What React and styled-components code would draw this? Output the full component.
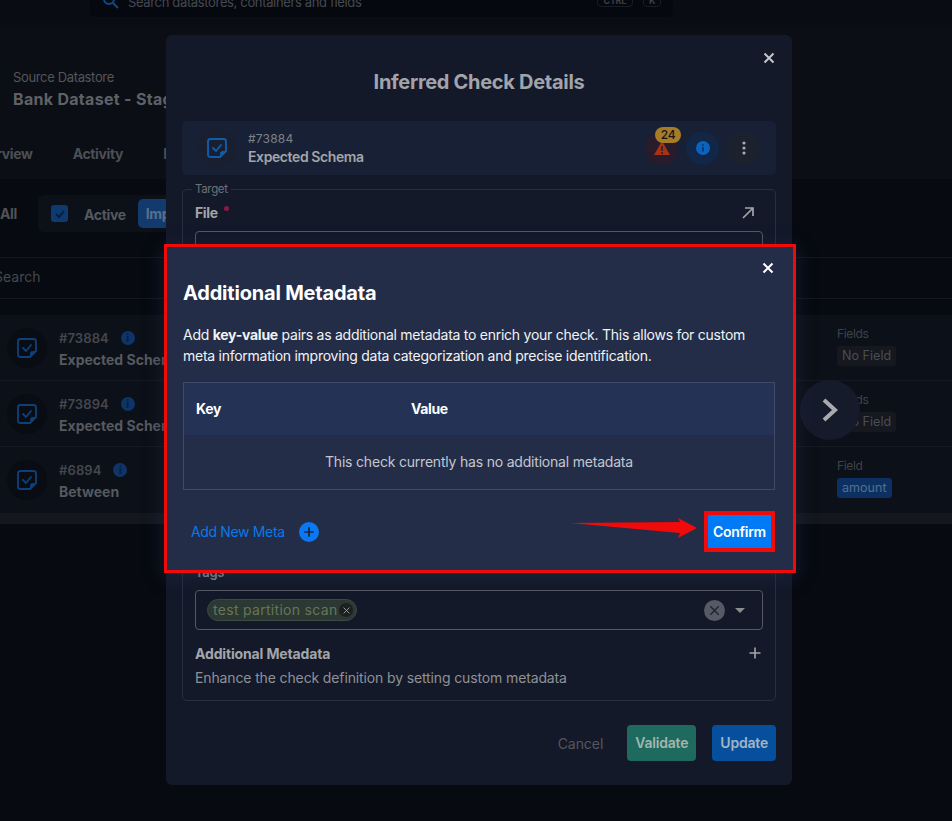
import React from "react";
import styled, { createGlobalStyle } from "styled-components";

const Global = createGlobalStyle`
  html, body { margin: 0; padding: 0; background: #070a11; overflow: hidden; }
  * { box-sizing: border-box; }
  body { font-family: Inter, "Noto Sans", sans-serif; letter-spacing: -0.35px; }
`;

const Stage = styled.div`position: relative; width: 952px; height: 821px; overflow: hidden; background: #070a11;`;

/* ---------- dimmed page behind the dialogs ---------- */
const Page = styled.div`display: flex; flex-direction: column; height: 821px;`;
const TopBar = styled.div`height: 27px; padding-left: 90px; background: #090c13;`;
const GlobalSearch = styled.div`
  width: 583px; height: 17px; background: #06080f; border-radius: 0 0 6px 6px; display: flex; align-items: flex-end;
  padding: 0 12px 10px; gap: 8px; font-size: 13px; line-height: 14px; overflow: hidden; color: #45484f;
  svg { flex: none; margin-bottom: -3px; }
`;
const SearchHint = styled.span`flex: 1; white-space: nowrap; margin-bottom: -2px;`;
const Kbd = styled.span`font-size: 9px; font-weight: 700; line-height: 10px; padding: 0 ${p => p.$pad}px; border: 1px solid #191c24; border-radius: 4px; color: #3c3f46; margin-left: ${p => p.$ml}px;`;
const Header = styled.div`height: 152px; background: #0b0e15; display: flex; flex-direction: column;`;
const Datastore = styled.div`height: 117px; padding: 41px 0 0 13px;`;
const DsLabel = styled.div`font-size: 13px; line-height: 18px; color: #53565b;`;
const DsName = styled.div`font-size: 16px; line-height: 24px; margin-top: 1px; font-weight: 700; color: #5f6166; white-space: nowrap; letter-spacing: 0.3px;`;
const Tabs = styled.div`display: flex; gap: 40px; margin-left: -30px; font-size: 14px; font-weight: 700; color: #4c4f54; line-height: 20px;`;
const Filters = styled.div`height: 78px; padding: 16px 0 0 0; display: flex; align-items: flex-start; gap: 21px;`;
const AllLabel = styled.span`font-size: 14px; font-weight: 700; color: #4f5257; line-height: 37px;`;
const FilterPill = styled.div`height: 37px; width: 160px; background: #0c1019; border-radius: 6px; display: flex; align-items: center; padding-left: 13px; gap: 16px;`;
const FilterCheck = styled.span`width: 17px; height: 17px; border-radius: 3px; background: #0e3a6f; flex: none; display: flex; align-items: center; justify-content: center;`;
const FilterText = styled.span`font-size: 14px; font-weight: 700; color: #55585d; margin-top: 2px;`;
const FilterActive = styled.span`height: 29px; padding: 0 8px; margin-left: -4px; border-radius: 5px; background: #123a6d; color: #55708f; font-size: 14px; font-weight: 700; line-height: 30px;`;
const SearchRow = styled.div`height: 42px; border-top: 1px solid #14171f; border-bottom: 1px solid #14171f; font-size: 14px; line-height: 38px; color: #45484e; text-indent: -6px; letter-spacing: 0;`;
const Gap = styled.div`height: ${p => p.$h}px; flex: none;`;
const RowList = styled.div`background: #0c1018; display: flex; flex-direction: column;`;
const Row = styled.div`
  height: 66px; display: grid; padding-left: 7px;
  grid-template-columns: 830px 1fr; align-items: start;
  border-bottom: ${p => (p.$last ? "0" : "1px solid #151922")};
`;
const RowLeft = styled.div`display: flex; align-items: center; gap: 12px; height: 66px;`;
const RowIcon = styled.span`width: 40px; height: 40px; border-radius: 50%; background: #090c12; display: flex; align-items: center; justify-content: center; flex: none;`;
const RowText = styled.div`display: flex; flex-direction: column; gap: 2px; padding-top: 2px;`;
const RowId = styled.div`display: flex; align-items: center; gap: 12px; font-size: 13px; line-height: 20px; font-weight: 600; color: #44474d; letter-spacing: 0.1px;`;
const RowTitle = styled.div`font-size: 14px; line-height: 20px; font-weight: 700; color: #56595e; white-space: nowrap; letter-spacing: 0;`;
const Dot = styled.span`width: 14px; height: 14px; border-radius: 50%; background: #0e3468; color: #07203f; font-size: 10px; font-weight: 800; line-height: 14px; text-align: center; flex: none;`;
const RowRight = styled.div`padding-top: 11px; display: flex; flex-direction: column; align-items: flex-start; gap: 5px;`;
const FieldLabel = styled.div`font-size: 12px; line-height: 15px; color: #3f4248;`;
const Chip = styled.div`height: 20px; padding: 0 5px; border-radius: 3px; font-size: 12.5px; line-height: 20px; letter-spacing: 0.05px; background: ${p => (p.$blue ? "#0d3062" : "#15181f")}; color: ${p => (p.$blue ? "#54708f" : "#4a4d53")};`;
const Scrollbar = styled.div`height: 11px; background: #14171e;`;

const NextButton = styled.div`
  position: absolute; left: 800px; top: 380px; width: 60px; height: 60px; border-radius: 50%;
  background: #151b2b; display: flex; align-items: center; justify-content: center;
`;

/* ---------- inferred check dialog ---------- */
const CheckDialog = styled.div`
  position: absolute; left: 166px; top: 35px; width: 626px; height: 750px;
  background: #131929; border-radius: 6px; padding: 0 16px;
  display: flex; flex-direction: column;
`;
const CloseBtn = styled.span`position: absolute; display: flex; right: ${p => p.$r}px; top: ${p => p.$t}px; color: ${p => p.$c};`;
const DialogTitle = styled.h2`margin: 35px 0 0; height: 24px; font-size: 20px; line-height: 24px; font-weight: 700; text-align: center; color: #a2a4a9; letter-spacing: -0.3px;`;
const CheckCard = styled.div`margin-top: 27px; height: 54px; border-radius: 5px; background: #172035; display: flex; align-items: center; padding: 0 16px; gap: 12px;`;
const CardIcon = styled.span`width: 38px; height: 38px; border-radius: 50%; background: #191f2e; display: flex; align-items: center; justify-content: center; flex: none;`;
const CardText = styled.div`flex: 1; display: flex; flex-direction: column; padding-top: 1px;`;
const CardId = styled.div`font-size: 12px; line-height: 16px; color: #7f8288; letter-spacing: 0.2px;`;
const CardTitle = styled.div`font-size: 14px; line-height: 20px; font-weight: 600; color: #a3a5aa; letter-spacing: -0.4px;`;
const CardActions = styled.div`display: flex; gap: 8px;`;
const ActionCircle = styled.span`position: relative; width: 33px; height: 33px; border-radius: 50%; background: ${p => p.$bg}; display: flex; align-items: center; justify-content: center;`;
const CountBadge = styled.span`position: absolute; left: 10px; top: -5px; width: 26px; height: 16px; border-radius: 8px; background: #a67c26; color: #16161a; font-size: 12px; line-height: 16px; text-align: center; font-weight: 500;`;
const FieldSet = styled.fieldset`
  margin: 8px 0 0; padding: 0 12px; height: 518px; border: 1px solid #292f40; border-radius: 5px;
  min-width: 0;
`;
const Legend = styled.legend`font-size: 11.5px; line-height: 12px; color: #6d7076; padding: 0 3px; margin-left: -3px;`;
const FileRow = styled.div`display: flex; justify-content: space-between; align-items: center; height: 24px; margin-top: 5px; padding-right: 8px; svg { margin-top: 2px; }`;
const FileLabel = styled.div`font-size: 14px; font-weight: 700; color: #a3a5aa; position: relative;`;
const Required = styled.span`position: absolute; left: 29px; top: 2px; width: 5px; height: 5px; border-radius: 50%; background: #8d1745;`;
const InputBox = styled.div`height: ${p => p.$h}px; margin-top: ${p => p.$mt}px; border: 1px solid #555962; border-radius: 4px; display: flex; align-items: center; padding: 0 17px 0 12px; gap: 8px;`;
const TagsLabel = styled.div`margin-top: 294px; height: 14px; font-size: 13px; line-height: 14px; color: #95979c; font-weight: 600;`;
const Tag = styled.span`height: 22px; border-radius: 11px; background: #2b3833; border: 1px solid #3c4a3f; color: #667659; font-size: 14px; line-height: 20px; padding: 0 3px 0 5px; display: flex; align-items: center; gap: 2px; letter-spacing: 0.3px; margin-left: -1px;`;
const TagRemove = styled.span`width: 14px; height: 14px; border-radius: 50%; background: #1b211f; color: #a2a4a8; display: flex; align-items: center; justify-content: center;`;
const Spacer = styled.span`flex: 1;`;
const ClearBtn = styled.span`width: 21px; height: 21px; border-radius: 50%; background: #565a65; color: #1e2230; display: flex; align-items: center; justify-content: center; margin-right: 2px;`;
const Caret = styled.span`width: 0; height: 0; border-left: 5.5px solid transparent; border-right: 5.5px solid transparent; border-top: 5px solid #8b8d93;`;
const MetaRow = styled.div`display: flex; justify-content: space-between; align-items: center; height: 20px; margin-top: 13px; padding-right: 1px; font-size: 14px; font-weight: 700; color: #a3a5aa; letter-spacing: -0.15px;`;
const MetaHelp = styled.div`margin-top: 5px; font-size: 14px; line-height: 20px; color: #8f9196; letter-spacing: -0.13px;`;
const DialogActions = styled.div`margin-top: 24px; display: flex; justify-content: flex-end; align-items: center;`;
const CancelBtn = styled.span`font-size: 14px; color: #54575d; margin-right: 24px; letter-spacing: -0.05px;`;
const ActionBtn = styled.span`height: 36px; padding: 0 8px; border-radius: 4px; margin-left: ${p => p.$ml}px; background: ${p => p.$bg}; color: ${p => p.$c}; font-size: 14px; font-weight: 600; line-height: 36px; letter-spacing: -0.2px;`;

/* ---------- additional metadata dialog ---------- */
const MetaDialog = styled.div`
  position: absolute; left: 164px; top: 244px; width: 632px; height: 329px;
  background: #232d48; border: 3px solid #f10a0a; padding: 0 16px;
  box-shadow: 0 4px 16px rgba(35, 45, 72, 0.55);
`;
const MetaTitle = styled.h2`margin: 33px 0 0; font-size: 20px; line-height: 26px; font-weight: 700; color: #fff; letter-spacing: -0.2px;`;
const MetaText = styled.p`margin: 18px 0 0; font-size: 14px; line-height: 21px; color: #f2f3f5; letter-spacing: -0.26px; white-space: nowrap; b { font-weight: 700; }`;
const Table = styled.div`margin-top: 16px; width: 592px; height: 108px; border: 1px solid #40496a; display: flex; flex-direction: column;`;
const TableHead = styled.div`height: 52px; background: #233255; display: grid; grid-template-columns: 215px 1fr; align-items: center; padding: 0 0 2px 12px; font-size: 14px; font-weight: 700; color: #fff;`;
const TableEmpty = styled.div`flex: 1; display: flex; align-items: center; justify-content: center; padding-bottom: 2px; font-size: 14px; color: #c4c7cf; letter-spacing: -0.2px;`;
const MetaFooter = styled.div`margin-top: 21px; display: flex; align-items: center; justify-content: space-between; padding-left: 8px; height: 41px; width: 592px;`;
const AddMeta = styled.div`display: flex; align-items: center; gap: 14px; font-size: 14px; color: #0a78e8;`;
const PlusCircle = styled.span`width: 20px; height: 20px; border-radius: 50%; background: #0a78f0; color: #1b2440; display: flex; align-items: center; justify-content: center;`;
const ConfirmFrame = styled.div`border: 4px solid #f10a0a; display: flex;`;
const ConfirmBtn = styled.button`width: 63px; height: 33px; border: 0; padding: 0; background: #007bf5; color: #fff; font: 600 14px Inter, sans-serif; letter-spacing: -0.3px;`;
const Arrow = styled.svg`position: absolute; left: 403px; top: 269px;`;

const CheckDoc = ({ size = 22, color = "#0d3f78" }) => (
  <svg width={size} height={size} viewBox="0 0 22 22" fill="none">
    <path d="M4.5 2h13A2.5 2.5 0 0 1 20 4.5V14l-6 6H4.5A2.5 2.5 0 0 1 2 17.5v-13A2.5 2.5 0 0 1 4.5 2Z" stroke={color} strokeWidth="1.9" />
    <path d="M20 14.5 14.5 20v-3.5a2 2 0 0 1 2-2Z" fill={color} stroke={color} />
    <path d="m7 11 3 3 5-6" stroke={color} strokeWidth="1.9" strokeLinecap="round" strokeLinejoin="round" />
  </svg>
);
const X = ({ size = 14, w = 2 }) => (
  <svg width={size} height={size} viewBox="0 0 14 14" fill="none"><path d="M2.5 2.5l9 9M11.5 2.5l-9 9" stroke="currentColor" strokeWidth={w} /></svg>
);
const Plus = ({ size = 14, w = 1.6 }) => (
  <svg width={size} height={size} viewBox="0 0 14 14" fill="none"><path d="M7 1.5v11M1.5 7h11" stroke="currentColor" strokeWidth={w} /></svg>
);

const rows = [
  { id: "#73884", title: "Expected Schema", label: "Fields", chip: "No Field" },
  { id: "#73894", title: "Expected Schema", label: "Fields", chip: "No Field" },
  { id: "#6894", title: "Between", label: "Field", chip: "amount", blue: true },
];

export default function App() {
  return (
    <Stage>
      <Global />
      <Page>
        <TopBar>
          <GlobalSearch>
            <svg width="18" height="18" viewBox="0 0 18 18" fill="none"><circle cx="7" cy="7" r="5" stroke="#0c4a8e" strokeWidth="2" /><path d="m11 11 5 5" stroke="#0c4a8e" strokeWidth="2" /></svg>
            <SearchHint>Search datastores, containers and fields</SearchHint>
            <Kbd $pad={6}>CTRL</Kbd><Kbd $pad={5} $ml={2}>K</Kbd>
          </GlobalSearch>
        </TopBar>
        <Header>
          <Datastore>
            <DsLabel>Source Datastore</DsLabel>
            <DsName>Bank Dataset - Staging</DsName>
          </Datastore>
          <Tabs><span>Overview</span><span>Activity</span><span>Profiles</span></Tabs>
        </Header>
        <Filters>
          <AllLabel>All</AllLabel>
          <FilterPill>
            <FilterCheck><svg width="12" height="12" viewBox="0 0 12 12" fill="none"><path d="m2 6 3 3 5-6" stroke="#07203f" strokeWidth="2" /></svg></FilterCheck>
            <FilterText>Active</FilterText>
            <FilterActive>Important</FilterActive>
          </FilterPill>
        </Filters>
        <SearchRow>Search</SearchRow>
        <Gap $h={16} />
        <RowList>
          {rows.map((r, i) => (
            <Row key={r.id} $last={i === rows.length - 1}>
              <RowLeft>
                <RowIcon><CheckDoc /></RowIcon>
                <RowText>
                  <RowId>{r.id}<Dot>i</Dot></RowId>
                  <RowTitle>{r.title}</RowTitle>
                </RowText>
              </RowLeft>
              <RowRight>
                <FieldLabel>{r.label}</FieldLabel>
                <Chip $blue={r.blue}>{r.chip}</Chip>
              </RowRight>
            </Row>
          ))}
        </RowList>
        <Scrollbar />
      </Page>

      <NextButton>
        <svg width="22" height="28" viewBox="0 0 22 28" fill="none"><path d="m5 4 11 10L5 24" stroke="#a9abaf" strokeWidth="4" /></svg>
      </NextButton>

      <CheckDialog>
        <CloseBtn $r={16} $t={16} $c="#c4c6ca"><X /></CloseBtn>
        <DialogTitle>Inferred Check Details</DialogTitle>
        <CheckCard>
          <CardIcon><CheckDoc color="#0e5cad" /></CardIcon>
          <CardText>
            <CardId>#73884</CardId>
            <CardTitle>Expected Schema</CardTitle>
          </CardText>
          <CardActions>
            <ActionCircle $bg="#291c2a">
              <svg width="18" height="16" viewBox="0 0 18 16"><path d="M9 1l8 14H1Z" fill="#a83216" /><path d="M9 6v5M9 12v2" stroke="#291c2a" strokeWidth="1.5" /></svg>
              <CountBadge>24</CountBadge>
            </ActionCircle>
            <ActionCircle $bg="#122747">
              <svg width="14" height="14" viewBox="0 0 14 14"><circle cx="7" cy="7" r="7" fill="#0a63bd" /><path d="M7 6v4.5M7 3.2v1.6" stroke="#12315c" strokeWidth="1.6" /></svg>
            </ActionCircle>
            <ActionCircle $bg="#1c212e">
              <svg width="4" height="14" viewBox="0 0 4 14" fill="#a9abaf"><circle cx="2" cy="2" r="1.6" /><circle cx="2" cy="7" r="1.6" /><circle cx="2" cy="12" r="1.6" /></svg>
            </ActionCircle>
          </CardActions>
        </CheckCard>
        <FieldSet>
          <Legend>Target</Legend>
          <FileRow>
            <FileLabel>File<Required /></FileLabel>
            <svg width="14" height="14" viewBox="0 0 14 14" fill="none"><path d="M2 12 12 2M4 2h8v8" stroke="#a3a5aa" strokeWidth="1.7" /></svg>
          </FileRow>
          <InputBox $h={40} $mt={7} />
          <TagsLabel>Tags</TagsLabel>
          <InputBox $h={40} $mt={11}>
            <Tag>test partition scan<TagRemove><X size={9} w={1.4} /></TagRemove></Tag>
            <Spacer />
            <ClearBtn><X size={13} w={1.4} /></ClearBtn>
            <Caret />
          </InputBox>
          <MetaRow>Additional Metadata<Plus /></MetaRow>
          <MetaHelp>Enhance the check definition by setting custom metadata</MetaHelp>
        </FieldSet>
        <DialogActions>
          <CancelBtn>Cancel</CancelBtn>
          <ActionBtn $bg="#1e6a5e" $c="#a2b6b0">Validate</ActionBtn>
          <ActionBtn $bg="#054f9c" $ml={16} $c="#a3b4c8">Update</ActionBtn>
        </DialogActions>
      </CheckDialog>

      <MetaDialog>
        <CloseBtn $r={18} $t={14} $c="#fff"><X /></CloseBtn>
        <MetaTitle>Additional Metadata</MetaTitle>
        <MetaText>
          Add <b>key-value</b> pairs as additional metadata to enrich your check. This allows for custom
          <br />meta information improving data categorization and precise identification.
        </MetaText>
        <Table>
          <TableHead><span>Key</span><span>Value</span></TableHead>
          <TableEmpty>This check currently has no additional metadata</TableEmpty>
        </Table>
        <MetaFooter>
          <AddMeta>Add New Meta<PlusCircle><Plus size={12} w={2} /></PlusCircle></AddMeta>
          <ConfirmFrame><ConfirmBtn>Confirm</ConfirmBtn></ConfirmFrame>
        </MetaFooter>
        <Arrow width="127" height="24" viewBox="0 0 127 24"><path d="M0 7 L110 6 L108 2 L127 12 L108 22 L110 17 Z" fill="#f10a0a" /></Arrow>
      </MetaDialog>
    </Stage>
  );
}
